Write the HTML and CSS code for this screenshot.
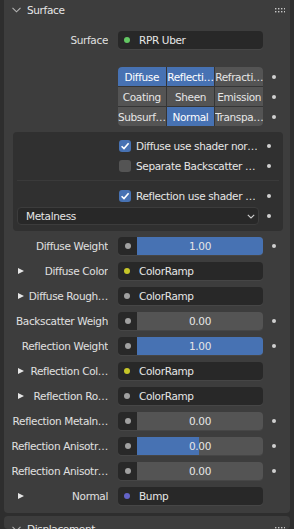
FILE: index.html
```html
<!DOCTYPE html>
<html>
<head>
    <title>Surface</title>
    <link rel="stylesheet" href="styles.css">
</head>
<body>
<div class="panel">
    <div class="panel-header">
        <svg class="chevron" width="9" height="6" viewBox="0 0 9 6"><polyline points="0.5,0.8 4.5,4.8 8.5,0.8"/></svg>
        <span class="panel-title">Surface</span>
        <svg class="grip" width="11" height="6" viewBox="0 0 11 6">
            <rect x="1" y="1" width="1.4" height="1.4"/><rect x="4" y="1" width="1.4" height="1.4"/><rect x="7" y="1" width="1.4" height="1.4"/><rect x="10" y="1" width="1" height="1.4"/>
            <rect x="1" y="4" width="1.4" height="1.4"/><rect x="4" y="4" width="1.4" height="1.4"/><rect x="7" y="4" width="1.4" height="1.4"/><rect x="10" y="4" width="1" height="1.4"/>
        </svg>
    </div>
    <div class="panel-body">
        <div class="row">
            <div class="label"><span class="label-text">Surface</span></div>
            <div class="field link"><span class="socket shader"></span><span class="field-text">RPR Uber</span></div>
            <div class="decor"></div>
        </div>

        <div class="enum-block">
            <div class="enum-grid">
                <div class="enum-cell active">Diffuse</div>
                <div class="enum-cell active">Reflecti…</div>
                <div class="enum-cell">Refracti…</div>
                <div class="enum-cell">Coating</div>
                <div class="enum-cell">Sheen</div>
                <div class="enum-cell">Emission</div>
                <div class="enum-cell">Subsurf…</div>
                <div class="enum-cell active">Normal</div>
                <div class="enum-cell">Transpa…</div>
            </div>
            <div class="enum-decor">
                <div class="decor"><span class="dot"></span></div>
                <div class="decor"><span class="dot"></span></div>
                <div class="decor"><span class="dot"></span></div>
            </div>
        </div>

        <div class="box">
            <div class="box-section">
                <div class="check-row">
                    <div class="check-content">
                        <span class="checkbox checked"><svg width="12" height="12" viewBox="0 0 12 12"><polyline points="2.6,6.2 5,8.6 9.6,3.2"/></svg></span>
                        <span class="check-text">Diffuse use shader nor…</span>
                    </div>
                    <div class="box-decor"><span class="dot"></span></div>
                </div>
                <div class="check-row">
                    <div class="check-content">
                        <span class="checkbox"></span>
                        <span class="check-text">Separate Backscatter …</span>
                    </div>
                    <div class="box-decor"><span class="dot"></span></div>
                </div>
            </div>
            <div class="box-section second">
                <div class="check-row">
                    <div class="check-content">
                        <span class="checkbox checked"><svg width="12" height="12" viewBox="0 0 12 12"><polyline points="2.6,6.2 5,8.6 9.6,3.2"/></svg></span>
                        <span class="check-text">Reflection use shader …</span>
                    </div>
                    <div class="box-decor"><span class="dot"></span></div>
                </div>
                <div class="drop-row">
                    <div class="dropdown">
                        <span>Metalness</span>
                        <svg class="drop-arrow" width="8" height="5" viewBox="0 0 8 5"><polyline points="0.8,0.8 4,4 7.2,0.8"/></svg>
                    </div>
                    <div class="box-decor"><span class="dot"></span></div>
                </div>
            </div>
        </div>

        <div class="rows">
            <div class="row">
                <div class="label"><span class="label-text">Diffuse Weight</span></div>
                <div class="field slider">
                    <span class="slider-socket"><span class="socket float"></span></span>
                    <span class="slider-bar"><span class="slider-fill" style="width:100%"></span><span class="slider-value">1.00</span></span>
                </div>
                <div class="decor"><span class="dot"></span></div>
            </div>
            <div class="row">
                <div class="label"><span class="tri"></span><span class="label-text">Diffuse Color</span></div>
                <div class="field link"><span class="socket color"></span><span class="field-text">ColorRamp</span></div>
                <div class="decor"></div>
            </div>
            <div class="row">
                <div class="label"><span class="tri"></span><span class="label-text">Diffuse Rough…</span></div>
                <div class="field link"><span class="socket float"></span><span class="field-text">ColorRamp</span></div>
                <div class="decor"></div>
            </div>
            <div class="row">
                <div class="label"><span class="label-text">Backscatter Weigh</span></div>
                <div class="field slider">
                    <span class="slider-socket"><span class="socket float"></span></span>
                    <span class="slider-bar"><span class="slider-fill" style="width:0%"></span><span class="slider-value">0.00</span></span>
                </div>
                <div class="decor"><span class="dot"></span></div>
            </div>
            <div class="row">
                <div class="label"><span class="label-text">Reflection Weight</span></div>
                <div class="field slider">
                    <span class="slider-socket"><span class="socket float"></span></span>
                    <span class="slider-bar"><span class="slider-fill" style="width:100%"></span><span class="slider-value">1.00</span></span>
                </div>
                <div class="decor"><span class="dot"></span></div>
            </div>
            <div class="row">
                <div class="label"><span class="tri"></span><span class="label-text">Reflection Col…</span></div>
                <div class="field link"><span class="socket color"></span><span class="field-text">ColorRamp</span></div>
                <div class="decor"></div>
            </div>
            <div class="row">
                <div class="label"><span class="tri"></span><span class="label-text">Reflection Ro…</span></div>
                <div class="field link"><span class="socket float"></span><span class="field-text">ColorRamp</span></div>
                <div class="decor"></div>
            </div>
            <div class="row">
                <div class="label"><span class="label-text">Reflection Metaln…</span></div>
                <div class="field slider">
                    <span class="slider-socket"><span class="socket float"></span></span>
                    <span class="slider-bar"><span class="slider-fill" style="width:0%"></span><span class="slider-value">0.00</span></span>
                </div>
                <div class="decor"><span class="dot"></span></div>
            </div>
            <div class="row">
                <div class="label"><span class="label-text">Reflection Anisotr…</span></div>
                <div class="field slider">
                    <span class="slider-socket"><span class="socket float"></span></span>
                    <span class="slider-bar"><span class="slider-fill" style="width:49%"></span><span class="slider-value">0.00</span></span>
                </div>
                <div class="decor"><span class="dot"></span></div>
            </div>
            <div class="row">
                <div class="label"><span class="label-text">Reflection Anisotr…</span></div>
                <div class="field slider">
                    <span class="slider-socket"><span class="socket float"></span></span>
                    <span class="slider-bar"><span class="slider-fill" style="width:0%"></span><span class="slider-value">0.00</span></span>
                </div>
                <div class="decor"><span class="dot"></span></div>
            </div>
            <div class="row">
                <div class="label"><span class="tri"></span><span class="label-text">Normal</span></div>
                <div class="field link"><span class="socket vector"></span><span class="field-text">Bump</span></div>
                <div class="decor"></div>
            </div>
        </div>
    </div>
</div>
<div class="panel closed">
    <div class="panel-header">
        <svg class="chevron" width="9" height="6" viewBox="0 0 9 6"><polyline points="0.5,0.8 4.5,4.8 8.5,0.8"/></svg>
        <span class="panel-title">Displacement</span>
        <svg class="grip" width="11" height="6" viewBox="0 0 11 6">
            <rect x="1" y="1" width="1.4" height="1.4"/><rect x="4" y="1" width="1.4" height="1.4"/><rect x="7" y="1" width="1.4" height="1.4"/><rect x="10" y="1" width="1" height="1.4"/>
            <rect x="1" y="4" width="1.4" height="1.4"/><rect x="4" y="4" width="1.4" height="1.4"/><rect x="7" y="4" width="1.4" height="1.4"/><rect x="10" y="4" width="1" height="1.4"/>
        </svg>
    </div>
</div>
</body>
</html>
```

FILE: styles.css
```css
body {
    margin: 0;
    width: 294px;
    height: 529px;
    overflow: hidden;
    background: #2e2e2e;
    font-family: "DejaVu Sans", sans-serif;
    font-size: 10.5px;
    letter-spacing: -0.35px;
    color: #e0e0e0;
}
.panel {
    margin: -3px 4px 0;
    background: #3d3d3d;
    border-radius: 4px;
    padding-bottom: 8px;
}
.panel.closed {
    margin-top: 3px;
    padding-bottom: 0;
    height: 13px;
    overflow: hidden;
}
.panel-header {
    height: 26px;
    display: flex;
    align-items: center;
    padding: 0 5px 0 8px;
}
.chevron {
    fill: none;
    stroke: #b4b4b4;
    stroke-width: 1.1;
    margin-right: 6px;
}
.panel-title {
    color: #e6e6e6;
}
.grip {
    margin-left: auto;
    fill: #c8c8c8;
}
.panel-body {
    padding-top: 8px;
}
.row {
    display: flex;
    align-items: center;
    height: 18px;
}
.label {
    width: 104px;
    height: 18px;
    display: flex;
    align-items: center;
    padding-left: 8px;
    box-sizing: border-box;
    margin-right: 10px;
}
.label-text {
    flex: 1;
    display: flex;
    justify-content: flex-end;
    white-space: nowrap;
    overflow: hidden;
}
.tri {
    width: 0;
    height: 0;
    border-top: 3px solid transparent;
    border-bottom: 3px solid transparent;
    border-left: 6px solid #e6e6e6;
    margin: 0 4px 0 6px;
}
.field {
    width: 145px;
    height: 18px;
    border-radius: 4px;
    box-shadow: 0 1px 0 rgba(255,255,255,0.05);
    display: flex;
    align-items: center;
}
.link {
    background: #282828;
    padding-left: 6px;
    box-sizing: border-box;
}
.field-text {
    margin-left: 9px;
    color: #e6e6e6;
}
.socket {
    width: 6px;
    height: 6px;
    border-radius: 50%;
    flex: none;
}
.shader { background: #63c763; }
.color { background: #c7c729; }
.float { background: #a1a1a1; }
.vector { background: #6363c7; }
.decor {
    width: 22px;
    height: 18px;
    display: flex;
    align-items: center;
    justify-content: center;
}
.dot {
    width: 4px;
    height: 4px;
    border-radius: 50%;
    background: #d0d0d0;
}

.enum-block {
    display: flex;
    margin-top: 18px;
    padding-left: 114px;
}
.enum-grid {
    width: 145px;
    display: grid;
    grid-template-columns: repeat(3, 1fr);
    grid-auto-rows: 19px;
    gap: 1px;
    background: #353535;
    border-radius: 4px;
    overflow: hidden;
}
.enum-cell {
    background: #545454;
    color: #e6e6e6;
    display: flex;
    align-items: center;
    justify-content: center;
    white-space: nowrap;
    overflow: hidden;
}
.enum-cell.active {
    background: #4772b3;
    color: #ffffff;
}
.enum-decor {
    display: flex;
    flex-direction: column;
    gap: 1px;
}
.enum-decor .decor {
    height: 19px;
}

.box {
    margin: 6px 0 0 9px;
    width: 270px;
    background: #303030;
    border-radius: 4px;
    padding: 0 4px;
    box-sizing: border-box;
}
.box-section {
    padding: 4px 0;
}
.box-section.second {
    border-top: 1px solid #3a3a3a;
    padding: 5px 0 6px;
}
.check-row, .drop-row {
    display: flex;
    align-items: center;
    height: 20px;
}
.drop-row {
    height: 18px;
    margin-top: 1px;
}
.check-content {
    width: 242px;
    padding-left: 102px;
    box-sizing: border-box;
    display: flex;
    align-items: center;
    overflow: hidden;
}
.checkbox {
    width: 12px;
    height: 12px;
    border-radius: 3px;
    background: #545454;
    flex: none;
    margin-right: 5px;
}
.checkbox.checked {
    background: #4772b3;
}
.checkbox svg {
    display: block;
    fill: none;
    stroke: #ffffff;
    stroke-width: 1.6;
}
.check-text {
    white-space: nowrap;
    overflow: hidden;
    color: #e6e6e6;
}
.box-decor {
    width: 20px;
    height: 18px;
    display: flex;
    align-items: center;
    justify-content: center;
}
.dropdown {
    width: 242px;
    height: 18px;
    background: #282828;
    border: 1px solid #3c3c3c;
    border-radius: 4px;
    box-sizing: border-box;
    display: flex;
    align-items: center;
    justify-content: space-between;
    padding: 0 3px 0 8px;
    color: #e6e6e6;
}
.drop-arrow {
    fill: none;
    stroke: #d0d0d0;
    stroke-width: 1.1;
}

.rows {
    margin-top: 6px;
    display: flex;
    flex-direction: column;
    gap: 7px;
}
.slider {
    overflow: hidden;
}
.slider-socket {
    width: 19px;
    height: 18px;
    background: #282828;
    display: flex;
    align-items: center;
    justify-content: center;
    flex: none;
}
.slider-bar {
    flex: 1;
    height: 18px;
    background: #545454;
    position: relative;
    display: flex;
    align-items: center;
    justify-content: center;
}
.slider-fill {
    position: absolute;
    left: 0;
    top: 0;
    bottom: 0;
    background: #4772b3;
}
.slider-value {
    position: relative;
    color: #e6e6e6;
}
```
